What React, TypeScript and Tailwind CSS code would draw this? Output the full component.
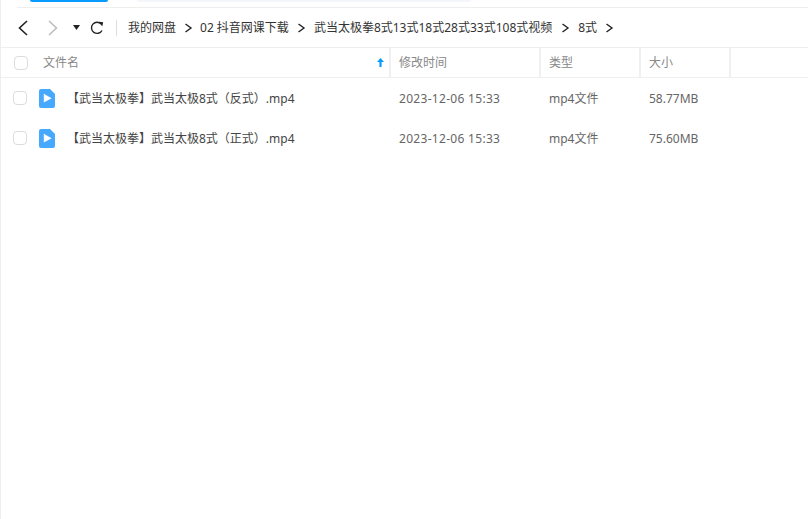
import React from "react";

const font = { fontFamily: '"Noto Sans", "Noto Sans CJK SC", sans-serif' };

function Chevron() {
  return (
    <svg width="9" height="10" viewBox="0 0 9 10" className="shrink-0" fill="none">
      <path d="M1.5 1 L7 5 L1.5 9" stroke="#222" strokeWidth="1.4" />
    </svg>
  );
}

function Checkbox() {
  return <div className="w-[14px] h-[14px] rounded-[4px] border border-[#dcdcdc] bg-white shrink-0" />;
}

function FileIcon() {
  return (
    <svg width="16" height="19" viewBox="0 0 16 19" className="shrink-0">
      <path d="M2 0 H11 L16 5 V17 A2 2 0 0 1 14 19 H2 A2 2 0 0 1 0 17 V2 A2 2 0 0 1 2 0 Z" fill="#46a9ff" />
      <path d="M4.8 4.8 L12.6 9.2 L4.8 13.6 Z" fill="#fff" />
    </svg>
  );
}

function Row({ name, size }: { name: string; size: string }) {
  return (
    <div className="flex h-10 items-center text-xs text-[#666]">
      <div className="w-[13px] ml-[12px]"><Checkbox /></div>
      <div className="ml-[13px]"><FileIcon /></div>
      <div className="ml-[12px] w-[332px] pt-[2px] text-[#444] whitespace-nowrap">{name}</div>
      <div className="w-[150px] pt-[2px] whitespace-nowrap tracking-[0.3px]">2023-12-06 15:33</div>
      <div className="w-[100px] pt-[2px] whitespace-nowrap">mp4文件</div>
      <div className="pt-[2px] whitespace-nowrap">{size}</div>
    </div>
  );
}

function HeaderCell({ className, children }: { className: string; children?: React.ReactNode }) {
  return <div className={`h-full flex items-center border-r-2 border-[#f0f0f0] ${className}`}>{children}</div>;
}

export default function App() {
  return (
    <div className="w-[808px] h-[519px] bg-white border-l border-[#eeeeee] overflow-hidden" style={font}>
      <div className="h-2 ml-4 border-b border-[#eeeeee] flex">
        <div className="ml-[13px] w-[78px] h-[2px] rounded-b-full bg-[#0a9bff]" />
        <div className="ml-[29px] w-[334px] h-[2px] rounded-b-full bg-[#f3f7fc]" />
      </div>

      <div className="h-10 flex items-center border-b border-[#eeeeee]">
        <svg width="12" height="16" viewBox="0 0 12 16" className="ml-[16px]" fill="none">
          <path d="M10 1 L2.5 8 L10 15" stroke="#222" strokeWidth="1.6" />
        </svg>
        <svg width="12" height="16" viewBox="0 0 12 16" className="ml-[18px]" fill="none">
          <path d="M2 1 L9.5 8 L2 15" stroke="#bbb" strokeWidth="1.5" />
        </svg>
        <svg width="7" height="5" viewBox="0 0 7 5" className="ml-[14px]">
          <path d="M0 0 H7 L3.5 5 Z" fill="#222" />
        </svg>
        <svg width="14" height="14" viewBox="0 0 14 14" className="ml-[10px]" fill="none">
          <path d="M11.2 3 A5.6 5.6 0 1 0 12 9.5" stroke="#222" strokeWidth="1.4" />
          <path d="M9 0.8 L13.2 1.2 L12.2 5.6 Z" fill="#222" />
        </svg>
        <div className="ml-[12px] w-px h-4 bg-[#dddddd]" />
        <div className="ml-[11px] flex items-center text-xs text-[#333] whitespace-nowrap">
          <span>我的网盘</span>
          <span className="ml-[8px] mr-[7px]"><Chevron /></span>
          <span>02 抖音网课下载</span>
          <span className="mx-[8px]"><Chevron /></span>
          <span>武当太极拳8式13式18式28式33式108式视频</span>
          <span className="ml-[9px] mr-[8px]"><Chevron /></span>
          <span>8式</span>
          <span className="ml-[8px]"><Chevron /></span>
        </div>
      </div>

      <div className="h-[30px] flex items-center border-b border-[#f0f0f0] text-xs text-[#888]">
        <div className="w-[390px] h-full flex items-center border-r-2 border-[#f0f0f0]">
          <div className="ml-[13px]"><Checkbox /></div>
          <span className="ml-[15px]">文件名</span>
          <svg width="7" height="9" viewBox="0 0 7 9" className="ml-auto mr-[5px]">
            <path d="M3.5 0 L7 4 H4.6 V9 H2.4 V4 H0 Z" fill="#0a9bff" />
          </svg>
        </div>
        <HeaderCell className="w-[150px] pl-2">修改时间</HeaderCell>
        <HeaderCell className="w-[100px] pl-2">类型</HeaderCell>
        <HeaderCell className="w-[90px] pl-2">大小</HeaderCell>
      </div>

      <Row name="【武当太极拳】武当太极8式（反式）.mp4" size="58.77MB" />
      <Row name="【武当太极拳】武当太极8式（正式）.mp4" size="75.60MB" />
    </div>
  );
}
